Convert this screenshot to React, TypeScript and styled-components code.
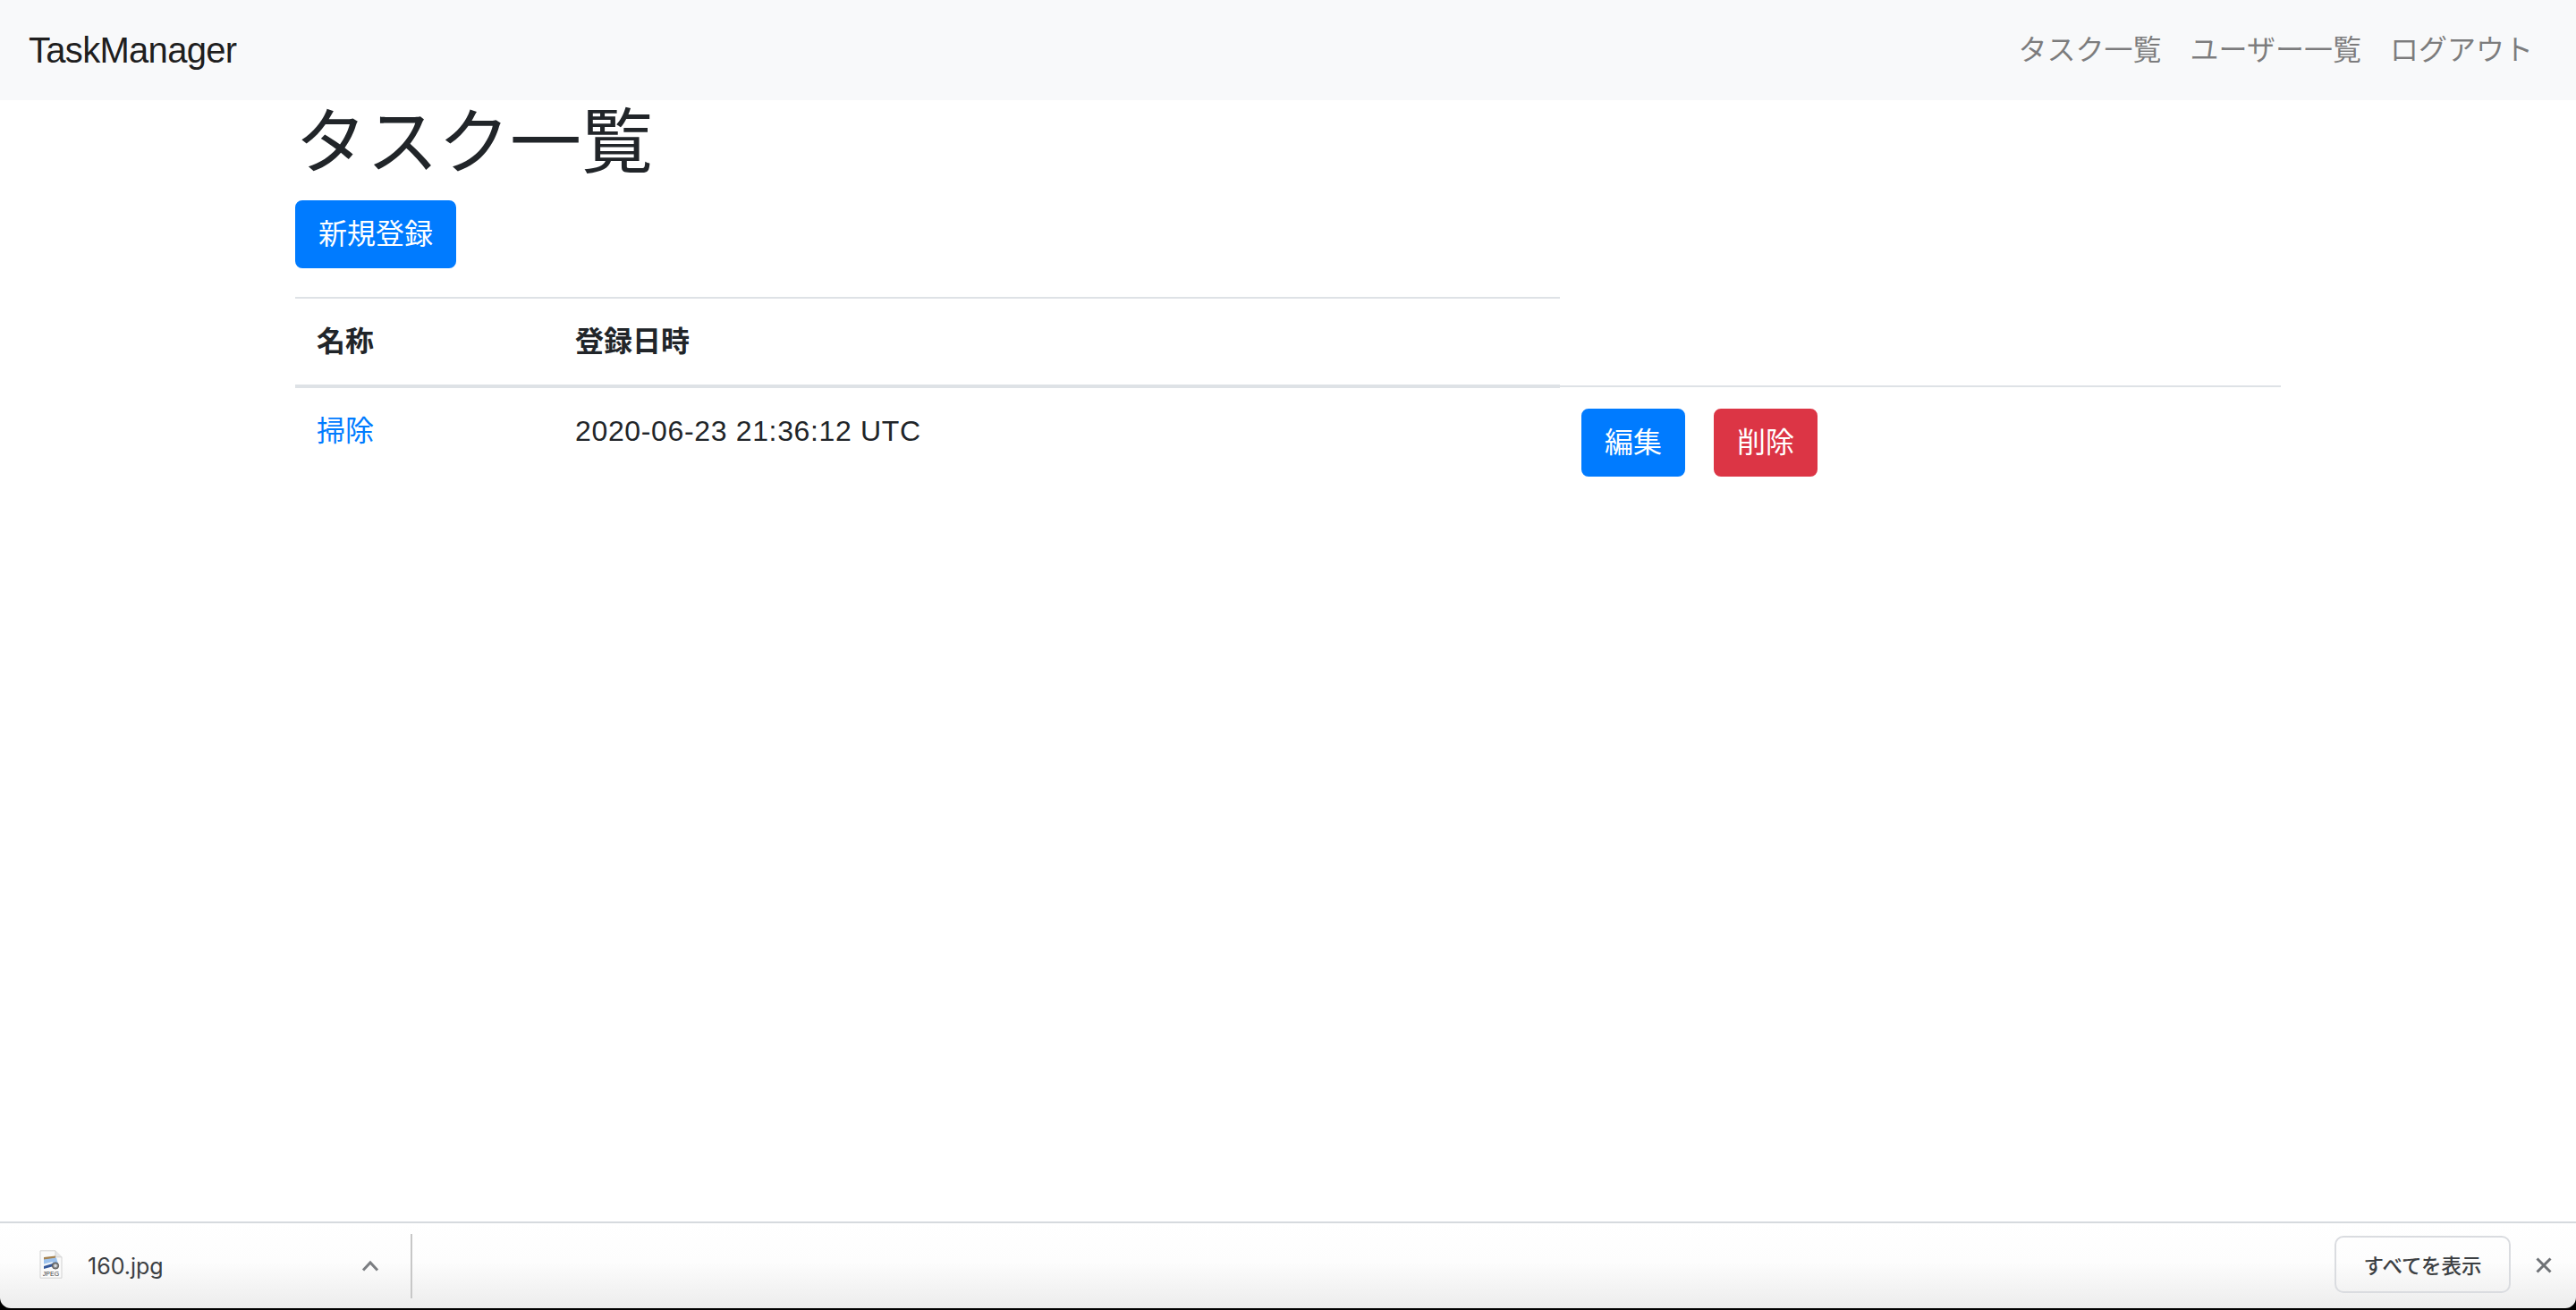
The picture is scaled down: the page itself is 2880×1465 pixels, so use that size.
import React from "react";
import styled, { createGlobalStyle } from "styled-components";

const Global = createGlobalStyle`
  html, body { margin: 0; padding: 0; background: #000; }
  body {
    font-family: "Liberation Sans", "Noto Sans CJK JP", sans-serif;
    font-size: 32px;
    line-height: 48px;
    color: #212529;
  }
`;

const Page = styled.div`
  display: flex;
  flex-direction: column;
  height: 1465px;
  overflow: hidden;
  background: #000;
`;

const Viewport = styled.div`
  flex: 1;
  min-height: 0;
  background: #fff;
`;

const Navbar = styled.nav`
  display: flex;
  align-items: center;
  justify-content: space-between;
  height: 112px;
  padding: 0 32px;
  background: #f8f9fa;
`;

const Brand = styled.a`
  font-size: 40px;
  line-height: 60px;
  letter-spacing: -0.7px;
  color: rgba(0, 0, 0, 0.9);
`;

const NavLinks = styled.div`
  display: flex;
`;

const NavLink = styled.a`
  padding: 0 16px;
  color: rgba(0, 0, 0, 0.5);
`;

const Container = styled.main`
  width: 2220px;
  margin: 0 auto;
`;

const Title = styled.h1`
  margin: 0 0 16px;
  font-size: 80px;
  line-height: 96px;
  font-weight: 400;
`;

const Button = styled.a<{ $danger?: boolean }>`
  display: inline-block;
  padding: 12px 24px;
  border: 2px solid ${(p) => (p.$danger ? "#dc3545" : "#007bff")};
  border-radius: 8px;
  background: ${(p) => (p.$danger ? "#dc3545" : "#007bff")};
  color: #fff;
  line-height: 48px;
`;

const Table = styled.table`
  width: 100%;
  margin-top: 32px;
  border-collapse: collapse;
  table-layout: fixed;
`;

const HeadCell = styled.th`
  padding: 24px;
  text-align: left;
  font-weight: 700;
  border-top: 2px solid #dee2e6;
  border-bottom: 4px solid #dee2e6;
`;

const Cell = styled.td`
  padding: 24px;
  vertical-align: top;
  border-top: 2px solid #dee2e6;
`;

const NameLink = styled.a`
  color: #007bff;
`;

const DateText = styled.span`
  letter-spacing: 0.65px;
`;

const Actions = styled.div`
  display: flex;
  gap: 32px;
`;

const DownloadBar = styled.footer`
  flex: none;
  box-sizing: border-box;
  height: 97px;
  margin-bottom: 2px;
  display: flex;
  align-items: center;
  border-top: 2px solid #d6dade;
  border-radius: 0 0 12px 12px;
  background: linear-gradient(#fff 0%, #fdfdfd 45%, #ececec 100%);
  font-family: "Inter", "Noto Sans CJK JP", sans-serif;
`;

const DownloadItem = styled.div`
  display: flex;
  align-items: center;
  width: 459px;
  padding-left: 44px;
  box-sizing: border-box;
`;

const FileName = styled.span`
  margin-left: 28px;
  flex: 1;
  font-size: 25px;
  color: #3c4043;
`;

const Chevron = styled.svg`
  width: 20px;
  height: 13px;
  margin-right: 35px;
`;

const Separator = styled.div`
  width: 2px;
  height: 72px;
  background: #c7c7c7;
`;

const Spacer = styled.div`
  flex: 1;
`;

const ShowAll = styled.button`
  width: 197px;
  height: 64px;
  margin-bottom: 3px;
  padding: 0;
  border: 2px solid #dadce0;
  border-radius: 10px;
  background: transparent;
  font-family: "Noto Sans CJK JP", sans-serif;
  font-size: 22.5px;
  font-weight: 500;
  color: #3c4043;
`;

const Close = styled.svg`
  width: 20px;
  height: 20px;
  margin: 0 26px 2px 27px;
`;

const IconSlot = styled.svg`
  margin-bottom: 4px;
`;

const FileIcon = () => (
  <IconSlot width="26" height="32" viewBox="0 0 26 32">
    <path d="M1 .8h17l7 7v23.4H1z" fill="#fafafa" stroke="#d2d2d2" strokeWidth="1" />
    <path d="M18 .8v7h7" fill="#e8e8e8" stroke="#d2d2d2" strokeWidth="1" />
    <path d="M5 8l13-1.5v3L5 11z" fill="#a5824f" />
    <path d="M5 10.5l14-2 2 7-16 3z" fill="#9cc2ee" />
    <path d="M5 15.5l10-2.5-1 3-9 2.5z" fill="#f2f5f8" />
    <path d="M5 18l10-3 1 3-11 3z" fill="#34589a" />
    <circle cx="18" cy="17.5" r="3.6" fill="#8b8b8b" stroke="#555" strokeWidth="1" />
    <circle cx="18" cy="17.5" r="1.7" fill="#d8dde2" />
    <text x="13" y="29" textAnchor="middle" fontSize="7" fontFamily="Liberation Sans" fill="#3a3a3a">JPEG</text>
  </IconSlot>
);

export default function App() {
  return (
    <Page>
      <Global />
      <Viewport>
        <Navbar>
          <Brand>TaskManager</Brand>
          <NavLinks>
            <NavLink>タスク一覧</NavLink>
            <NavLink>ユーザー一覧</NavLink>
            <NavLink>ログアウト</NavLink>
          </NavLinks>
        </Navbar>
        <Container>
          <Title>タスク一覧</Title>
          <Button>新規登録</Button>
          <Table>
            <colgroup>
              <col width="289" />
              <col width="1125" />
              <col />
            </colgroup>
            <thead>
              <tr>
                <HeadCell>名称</HeadCell>
                <HeadCell>登録日時</HeadCell>
              </tr>
            </thead>
            <tbody>
              <tr>
                <Cell><NameLink>掃除</NameLink></Cell>
                <Cell><DateText>2020-06-23 21:36:12 UTC</DateText></Cell>
                <Cell>
                  <Actions>
                    <Button>編集</Button>
                    <Button $danger>削除</Button>
                  </Actions>
                </Cell>
              </tr>
            </tbody>
          </Table>
        </Container>
      </Viewport>
      <DownloadBar>
        <DownloadItem>
          <FileIcon />
          <FileName>160.jpg</FileName>
          <Chevron viewBox="0 0 20 13">
            <path d="M2 11.5l8-8.5 8 8.5" fill="none" stroke="#7b7e82" strokeWidth="3" />
          </Chevron>
        </DownloadItem>
        <Separator />
        <Spacer />
        <ShowAll>すべてを表示</ShowAll>
        <Close viewBox="0 0 20 20">
          <path d="M2.5 2.5l15 15M17.5 2.5l-15 15" fill="none" stroke="#6f7276" strokeWidth="3" />
        </Close>
      </DownloadBar>
    </Page>
  );
}
